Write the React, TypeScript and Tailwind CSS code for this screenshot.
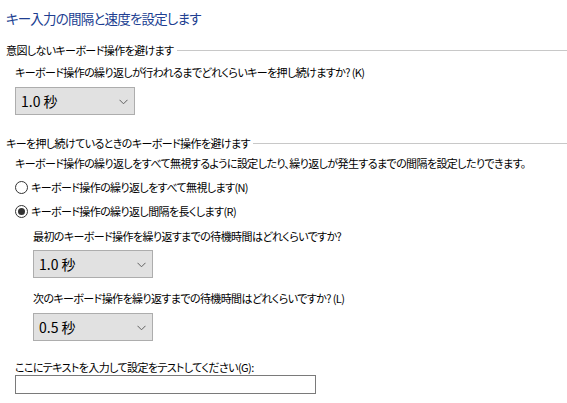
export default function App() {
  return (
    <div className="h-[403px] w-[567px] overflow-hidden bg-white font-['Noto_Sans_CJK_JP',sans-serif] text-[11px] leading-[16px] tracking-[-0.6px] text-black [font-feature-settings:'palt']">
      <h1 className="pl-[6px] pt-[8px] text-[13.5px] leading-[20px] tracking-[-0.8px] text-[#203e91]">
        キー入力の間隔と速度を設定します
      </h1>

      <GroupHeader className="mt-[14px]" title="意図しないキーボード操作を避けます" />
      <div className="pl-[15px]">
        <p className="mt-[6px] whitespace-nowrap">
          キーボード操作の繰り返しが行われるまでどれくらいキーを押し続けますか? (K)
        </p>
        <Dropdown className="mt-[7px]" value="1.0 秒" />
      </div>

      <GroupHeader className="mt-[20px]" title="キーを押し続けているときのキーボード操作を避けます" />
      <div className="pl-[15px]">
        <p className="mt-[4px] whitespace-nowrap">
          キーボード操作の繰り返しをすべて無視するように設定したり、繰り返しが発生するまでの間隔を設定したりできます。
        </p>
        <Radio className="mt-[8px]" label="キーボード操作の繰り返しをすべて無視します(N)" />
        <Radio className="mt-[8px]" checked label="キーボード操作の繰り返し間隔を長くします(R)" />
        <div className="pl-[18px]">
          <p className="mt-[9px] whitespace-nowrap">最初のキーボード操作を繰り返すまでの待機時間はどれくらいですか?</p>
          <Dropdown className="mt-[6px]" value="1.0 秒" />
          <p className="mt-[12px] whitespace-nowrap">次のキーボード操作を繰り返すまでの待機時間はどれくらいですか? (L)</p>
          <Dropdown className="mt-[7px]" value="0.5 秒" />
        </div>
        <p className="mt-[18px] whitespace-nowrap">ここにテキストを入力して設定をテストしてください(G):</p>
        <input className="block h-[19px] w-[301px] border border-[#7a7a7a] bg-white px-1 outline-none" />
      </div>
    </div>
  );
}

function GroupHeader({ title, className }: { title: string; className?: string }) {
  return (
    <div className={`flex items-center pl-[6px] ${className ?? ""}`}>
      <span className="whitespace-nowrap">{title}</span>
      <div className="ml-[3px] h-px flex-1 bg-[#c8c8c8]" />
    </div>
  );
}

function Dropdown({ value, className }: { value: string; className?: string }) {
  return (
    <div
      className={`flex h-[28px] w-[120px] items-center justify-between border border-[#adadad] bg-[#e1e1e1] pl-[5px] pr-[6px] text-[14px] tracking-normal ${className ?? ""}`}
    >
      <span>{value}</span>
      <svg width="9" height="6" viewBox="0 0 9 6" className="mt-[1px]">
        <path d="M0.5 0.8 L4.5 4.8 L8.5 0.8" fill="none" stroke="#606060" strokeWidth="1" />
      </svg>
    </div>
  );
}

function Radio({ label, checked, className }: { label: string; checked?: boolean; className?: string }) {
  return (
    <div className={`flex items-center ${className ?? ""}`}>
      <span className="flex h-[13px] w-[13px] shrink-0 items-center justify-center rounded-full border border-[#333]">
        {checked && <span className="h-[7px] w-[7px] rounded-full bg-[#333]" />}
      </span>
      <span className="ml-[3px] whitespace-nowrap">{label}</span>
    </div>
  );
}
